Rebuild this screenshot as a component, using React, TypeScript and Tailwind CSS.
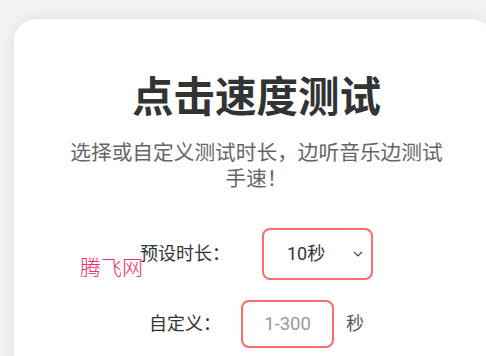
import React from "react";

export default function App() {
  return (
    <div
      className="relative w-[486px] h-[356px] overflow-hidden bg-[#f3f3f3] pt-[19px] pl-[14px]"
      style={{ fontFamily: 'Roboto, "Noto Sans CJK SC", "Noto Sans", sans-serif' }}
    >
      <div className="w-[479px] h-[420px] rounded-[22px] bg-white shadow-[0_0_18px_rgba(0,0,0,0.09)] flex flex-col items-center pl-[6px]">
        <h1 className="mt-[54px] text-[41.5px] leading-[50px] font-bold text-[#333333]">
          点击速度测试
        </h1>
        <p className="mt-[17px] w-[385px] text-center text-[20.7px] leading-[26px] text-[#666666]">
          选择或自定义测试时长，边听音乐边测试手速！
        </p>
        <div className="mt-[36px] flex items-center">
          <span className="w-[90px] text-[18px] leading-[24px] text-[#333333]">预设时长：</span>
          <div className="ml-[32px] w-[111px] h-[52px] rounded-[8px] border-2 border-[#ff6b6b] flex items-center pl-[23px] pr-[8px]">
            <span className="text-[18px] leading-[24px] text-[#333333]">10秒</span>
            <svg className="ml-auto" width="10" height="6" viewBox="0 0 10 6">
              <polyline points="1,1 5,5 9,1" fill="none" stroke="#444" strokeWidth="1.2" />
            </svg>
          </div>
        </div>
        <div className="mt-[20px] flex items-center">
          <span className="w-[72px] text-[18px] leading-[24px] text-[#333333]">自定义：</span>
          <div className="ml-[20px] w-[93px] h-[48px] rounded-[8px] border-2 border-[#ff6b6b] flex items-center justify-center">
            <span className="text-[18.5px] leading-[24px] text-[#999999]">1-300</span>
          </div>
          <span className="ml-[12px] text-[18px] leading-[24px] text-[#555555]">秒</span>
        </div>
      </div>
      <div className="absolute left-[80px] top-[255px] text-[21px] leading-[26px] font-light text-[#f0306a]">
        腾飞网
      </div>
    </div>
  );
}
